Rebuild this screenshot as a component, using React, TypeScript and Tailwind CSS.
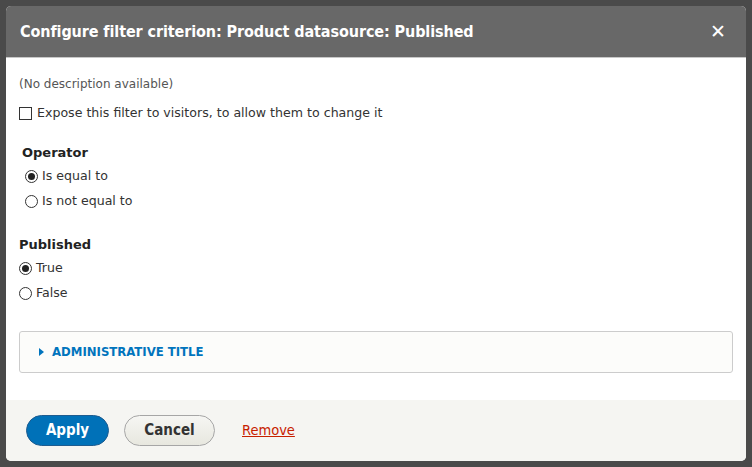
import { ReactNode } from 'react';

const body = "[font-family:'DejaVu_Sans',sans-serif]";
const cond = "[font-family:'DejaVu_Sans_Condensed','DejaVu_Sans',sans-serif]";

const Radio = ({ checked, label }: { checked?: boolean; label: string }) => (
  <div className="flex h-5 items-center gap-[4px]">
    <span className="flex h-[13px] w-[13px] items-center justify-center rounded-full border border-[#333] bg-white">
      {checked && <span className="h-[7px] w-[7px] rounded-full bg-[#222]" />}
    </span>
    <span className="text-[12.6px] text-[#333]">{label}</span>
  </div>
);

const Legend = ({ children }: { children: ReactNode }) => (
  <div className="flex h-[18px] items-center text-[13px] font-bold text-[#222]">{children}</div>
);

export default function App() {
  return (
    <div className="h-[467px] w-[752px] overflow-hidden bg-[#4a4a4a] pl-[6px] pt-[6px]">
      <div className={`flex h-[455px] w-[740px] flex-col overflow-hidden rounded-[5px] bg-white ${body}`}>
        {/* Title bar */}
        <div className="flex h-[52px] shrink-0 items-center justify-between border-b border-[#c8c8c8] bg-[#686868] pl-[14px] pr-[20px]">
          <h1 className={`text-[16px] font-bold tracking-[-0.1px] text-white ${cond}`}>
            Configure filter criterion: Product datasource: Published
          </h1>
          <span className="text-[19px] font-bold leading-none text-white">✕</span>
        </div>

        {/* Content */}
        <div className="flex-1 px-[13px] pt-[17px]">
          <p className="flex h-[18px] items-center text-[12px] text-[#555]">(No description available)</p>

          <label className="mt-[10px] flex h-5 items-center gap-[5px]">
            <span className="h-[13px] w-[13px] border border-[#333] bg-white" />
            <span className="text-[12.6px] text-[#333]">Expose this filter to visitors, to allow them to change it</span>
          </label>

          <div className="mt-[21px] pl-[3px]">
            <Legend>Operator</Legend>
            <div className="mt-[4px] pl-[3px]">
              <Radio checked label="Is equal to" />
              <div className="mt-[5px]">
                <Radio label="Is not equal to" />
              </div>
            </div>
          </div>

          <div className="mt-[25px]">
            <Legend>Published</Legend>
            <div className="mt-[4px]">
              <Radio checked label="True" />
              <div className="mt-[5px]">
                <Radio label="False" />
              </div>
            </div>
          </div>

          <div className="mt-[28px] flex h-[42px] items-center rounded-[3px] border border-[#ccc] bg-[#fcfcfa] pl-[19px]">
            <span className="mr-[8px] h-0 w-0 border-y-[4px] border-l-[5px] border-y-transparent border-l-[#0074bd]" />
            <span className={`text-[13px] font-bold uppercase text-[#0074bd] ${cond}`}>Administrative title</span>
          </div>
        </div>

        {/* Button pane */}
        <div className={`flex h-[61px] shrink-0 items-center bg-[#f5f5f2] pl-[20px] ${cond}`}>
          <button className="h-[31px] w-[83px] rounded-[20px] border border-[#1e5c90] bg-[#0071b8] text-[15px] font-bold text-white">
            Apply
          </button>
          <button className="ml-[15px] h-[31px] w-[91px] rounded-[20px] border border-[#a6a6a6] bg-gradient-to-b from-[#f6f6f3] to-[#e7e7df] text-[15px] font-bold text-[#333]">
            Cancel
          </button>
          <a className="ml-[27px] text-[14.5px] text-[#c72100] underline">Remove</a>
        </div>
      </div>
    </div>
  );
}
